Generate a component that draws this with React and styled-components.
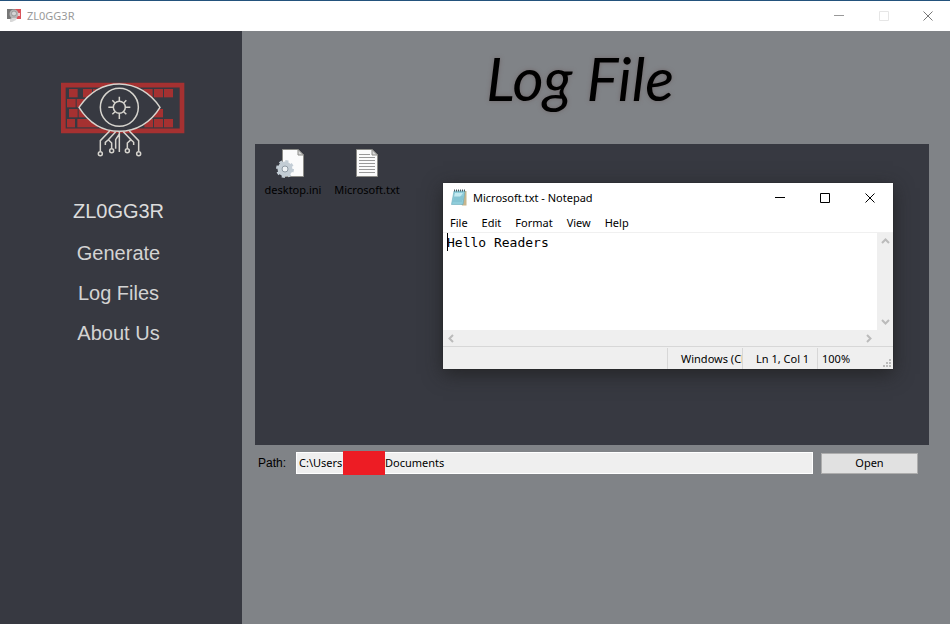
import React from "react";
import styled, { createGlobalStyle } from "styled-components";

const Global = createGlobalStyle`
  *, *::before, *::after { box-sizing: border-box; }
  body { margin: 0; background: #808387; font: 12px/16px "Noto Sans", "Open Sans", sans-serif; color: #000; }
  button, input, textarea { font: inherit; color: inherit; margin: 0; padding: 0; border: 0; background: none; outline: none; }
`;

const Window = styled.div`
  display: flex;
  flex-direction: column;
  min-height: 100vh;
`;

const TitleBar = styled.header`
  display: flex;
  align-items: center;
  height: 31px;
  padding-left: 7px;
  background: #fff;
  border-top: 1px solid #23527c;
  color: #999;
  font-size: 11px;
`;

const WindowName = styled.span`
  flex: 1;
  margin-left: 6px;
  white-space: nowrap;
`;

const CaptionButton = styled.button`
  display: flex;
  align-items: center;
  justify-content: center;
  width: ${(p) => p.$width}px;
  height: 29px;
  color: ${(p) => p.$tone};
`;

const Body = styled.div`
  display: flex;
  flex: 1;
`;

const Sidebar = styled.nav`
  display: flex;
  flex-direction: column;
  align-items: center;
  flex: 0 0 242px;
  padding: 51px 5px 0 0;
  background: #373941;
`;

const LogoDrawing = styled.svg`
  margin-left: 8px;
`;

const Brand = styled.h1`
  margin: 41px 0 10px;
  font: 20px/24px "Liberation Sans", Arial, sans-serif;
  color: #dcdcdc;
`;

const NavLink = styled.a`
  font: 20px/40px "Liberation Sans", Arial, sans-serif;
  color: #d3d3d3;
  text-decoration: none;
`;

const Main = styled.main`
  display: flex;
  flex-direction: column;
  flex: 1;
  min-width: 0;
  padding: 0 21px 0 13px;
`;

const Heading = styled.h2`
  margin: 0;
  padding: 13px 24px 0 0;
  height: 113px;
  text-align: center;
  font: italic 400 60px/68px Lato, "Liberation Sans", cursive;
  text-shadow: 0 0 4px #70686a;
`;

const Files = styled.section`
  position: relative;
  display: flex;
  align-items: flex-start;
  height: 301px;
  padding: 4px 0 0 1px;
  background: #373941;
`;

const FileItem = styled.button`
  display: flex;
  flex-direction: column;
  align-items: center;
  gap: 2px;
  width: 74px;
  font-size: 11px;
  white-space: nowrap;
`;

const PathRow = styled.form`
  display: flex;
  align-items: center;
  padding: 7px 11px 0 3px;
  gap: 8px;
`;

const PathLabel = styled.label`
  width: 30px;
  font: 12px/16px "Liberation Sans", Arial, sans-serif;
`;

const PathField = styled.div`
  display: flex;
  align-items: center;
  flex: 1;
  height: 22px;
  background: #efefef;
  border: 1px solid #fff;
`;

const PathInput = styled.input`
  flex: ${(p) => (p.$grow ? "1" : "0 0 46px")};
  min-width: 0;
  height: 20px;
  padding-left: ${(p) => (p.$grow ? 0 : 2)}px;
  padding-bottom: 2px;
  font-size: 11px;
`;

const Redaction = styled.span`
  flex: 0 0 42px;
  height: 24px;
  background: #ed1c24;
`;

const OpenButton = styled.button`
  width: 97px;
  height: 21px;
  background: #e1e1e1;
  border: 1px solid #adadad;
  font-size: 11px;
  line-height: 18px;
`;

const Notepad = styled.section`
  position: absolute;
  top: 39px;
  right: 36px;
  width: 450px;
  background: #fff;
  font-size: 11px;
  box-shadow: 0 0 1px #222, 0 5px 18px rgba(30, 30, 30, 0.75);
`;

const NotepadBar = styled.header`
  display: flex;
  align-items: center;
  height: 30px;
  padding-left: 8px;
`;

const Menu = styled.div`
  display: flex;
  gap: 14px;
  height: 20px;
  padding-left: 7px;
  border-bottom: 1px solid #f0f0f0;
`;

const MenuItem = styled.button`
  line-height: 18px;
`;

const Editor = styled.div`
  display: grid;
  grid-template-columns: 1fr 16px;
  background: #efefef;
`;

const Page = styled.div`
  position: relative;
  height: 97px;
  background: #fff;
`;

const TextArea = styled.textarea`
  display: block;
  width: 100%;
  height: 97px;
  padding: 1px 4px;
  resize: none;
  overflow: hidden;
  font: 13px/17px "DejaVu Sans Mono", "Liberation Mono", monospace;
`;

const Caret = styled.span`
  position: absolute;
  top: 0;
  left: 4px;
  width: 1px;
  height: 18px;
  background: #000;
`;

const ScrollTrack = styled.div`
  display: flex;
  justify-content: space-between;
  align-items: center;
  flex-direction: ${(p) => (p.$vertical ? "column" : "row")};
  padding: ${(p) => (p.$vertical ? "4px 0" : "0 4px")};
  height: ${(p) => (p.$vertical ? "auto" : "16px")};
`;

const ScrollButton = styled.button`
  display: flex;
  color: #bbb;
`;

const StatusBar = styled.footer`
  display: flex;
  justify-content: flex-end;
  height: 23px;
  padding-top: 1px;
  background: #efefef;
  border-top: 1px solid #d7d7d7;
`;

const StatusCell = styled.span`
  width: ${(p) => p.$width}px;
  padding-left: ${(p) => p.$pad}px;
  border-left: 1px solid #d7d7d7;
  line-height: 21px;
  white-space: nowrap;
  overflow: hidden;
`;

const Grip = styled.svg`
  align-self: flex-end;
  margin: 0 1px 1px 0;
`;

const captionPaths = {
  Minimize: "M0 4.500H10",
  Maximize: "M.5 .5H9.5V9.5H.5Z",
  Close: "M.5 .5L9.5 9.5M9.5 .5L.5 9.5",
};

function Caption({ name, tone, width = 45 }) {
  return (
    <CaptionButton type="button" aria-label={name} $tone={tone} $width={width}>
      <svg width="10" height="10" viewBox="0 0 10 10" fill="none" stroke="currentColor">
        <path d={captionPaths[name]} />
      </svg>
    </CaptionButton>
  );
}

const chevrons = {
  Up: "M1 6L4.500 2.500L8 6",
  Down: "M1 3L4.500 6.500L8 3",
  Left: "M6 1L2.500 4.500L6 8",
  Right: "M3 1L6.500 4.500L3 8",
};

function Scroll({ way }) {
  return (
    <ScrollButton type="button" aria-label={"Scroll " + way.toLowerCase()}>
      <svg width="9" height="9" viewBox="0 0 9 9" fill="none" stroke="currentColor" strokeWidth="2">
        <path d={chevrons[way]} />
      </svg>
    </ScrollButton>
  );
}

function AppIcon() {
  return (
    <svg width="14" height="16" viewBox="0 0 14 16">
      <path d="M0 1H8V11H0Z" fill="#777" />
      <path d="M8 1H14V11H8Z" fill="#d9535a" />
      <circle cx="7" cy="6" r="4.500" fill="#b5b5b5" />
      <circle cx="7" cy="5.500" r="2.500" fill="#d6d6d6" stroke="#999" />
      <path d="M3 11L5 10H10L9 12L5 14H3Z" fill="#d8d8d8" />
      <path d="M11 5H13V8H11Z" fill="#f0c5c7" />
    </svg>
  );
}

const logoKeys = [
  [57, 57, 26], [99, 57, 27], [129, 57, 18], [51, 87, 26], [80, 87, 22], [57, 117, 26], [86, 117, 22],
  [51, 147, 24], [82, 147, 62], [280, 57, 28], [312, 57, 27], [342, 57, 27],
  [303, 117, 36], [283, 147, 26], [312, 147, 27], [342, 147, 27],
];

function Logo() {
  return (
    <LogoDrawing width="126" height="76" viewBox="30 36 378 228" fill="none" role="img" aria-label="Eye over a keyboard">
      <path d="M40 45.500H396V182.500H40Z" stroke="#a53131" strokeWidth="14" />
      {logoKeys.map(([x, y, w]) => (
        <rect key={x + "-" + y} x={x} y={y} width={w} height="25" fill="#a53131" />
      ))}
      <g stroke="#d6d4ce" strokeWidth="4.500">
        <path d="M87 112C116 70 158 42 208 42S302 70 330 112C302 158 258 184 208 184S116 158 87 112Z" fill="#373941" />
        <circle cx="208" cy="112" r="57" />
        <circle cx="208" cy="112" r="18" />
        <path d="M208 94V80M208 130V147M190 112H175M226 112H241M195 99L187 91M221 99L229 91M195 125L187 133M221 125L229 133" />
        <path d="M179 183L151 212V244M197 185L175 209M166 225V217L175 209L185 219V235M197 236V209L208 192M208 185V246M220 185L243 209L232 219V235M243 209L251 217V225M238 183L266 212V244" />
        <circle cx="151" cy="251" r="6" />
        <circle cx="185" cy="242" r="6" />
        <circle cx="232" cy="242" r="6" />
        <circle cx="266" cy="251" r="6" />
      </g>
    </LogoDrawing>
  );
}

function Sheet() {
  return (
    <>
      <path d="M11.500 1.500H27L32.500 7V28.500H11.500Z" fill="#fbfbfb" stroke="#8c8c88" />
      <path d="M27 1.500V7H32.500Z" fill="#d8d8d8" stroke="#8c8c88" />
    </>
  );
}

function SettingsFileIcon() {
  return (
    <svg width="44" height="32" viewBox="0 0 44 32">
      <Sheet />
      <circle cx="14" cy="21" r="5" fill="none" stroke="#c3cdd5" strokeWidth="5" />
      <circle cx="14" cy="21" r="7.500" fill="none" stroke="#c3cdd5" strokeWidth="3" strokeDasharray="3 2.900" />
      <circle cx="14" cy="21" r="3" fill="#eef2f5" stroke="#8e9aa4" />
    </svg>
  );
}

function TextFileIcon() {
  return (
    <svg width="44" height="32" viewBox="0 0 44 32">
      <Sheet />
      <path d="M14 6.500H25M14 9.500H30M14 12.500H30M14 15.500H30M14 18.500H30M14 21.500H30M14 24.500H30" stroke="#999" />
    </svg>
  );
}

function NotepadIcon() {
  return (
    <svg width="16" height="18" viewBox="0 0 16 18">
      <path d="M5 2H15.500V16.500H11Z" fill="#c8b58c" />
      <path d="M3 2H14L12 15.500H.5Z" fill="#8fcddb" stroke="#68a9b8" strokeWidth=".6" />
      <path d="M4 4H12L9 8H3Z" fill="#c3e9f0" />
      <path d="M3 8H12M2.500 10H12M2 12H11" stroke="#72b6c6" strokeWidth=".7" />
      <path d="M3 1.500H14" stroke="#4d5b60" strokeWidth="2" strokeDasharray="1 1" />
    </svg>
  );
}

export default function App() {
  return (
    <>
      <Global />
      <Window>
        <TitleBar>
          <AppIcon />
          <WindowName>ZL0GG3R</WindowName>
          <Caption name="Minimize" tone="#999" />
          <Caption name="Maximize" tone="#e6e6e6" />
          <Caption name="Close" tone="#777" width={44} />
        </TitleBar>
        <Body>
          <Sidebar>
            <Logo />
            <Brand>ZL0GG3R</Brand>
            <NavLink href="#generate">Generate</NavLink>
            <NavLink href="#log-files">Log Files</NavLink>
            <NavLink href="#about">About Us</NavLink>
          </Sidebar>
          <Main>
            <Heading>Log File</Heading>
            <Files>
              <FileItem type="button">
                <SettingsFileIcon />
                desktop.ini
              </FileItem>
              <FileItem type="button">
                <TextFileIcon />
                Microsoft.txt
              </FileItem>
              <Notepad>
                <NotepadBar>
                  <NotepadIcon />
                  <WindowName>Microsoft.txt - Notepad</WindowName>
                  <Caption name="Minimize" tone="#000" />
                  <Caption name="Maximize" tone="#000" />
                  <Caption name="Close" tone="#000" width={46} />
                </NotepadBar>
                <Menu>
                  {["File", "Edit", "Format", "View", "Help"].map((m) => (
                    <MenuItem type="button" key={m}>{m}</MenuItem>
                  ))}
                </Menu>
                <Editor>
                  <Page>
                    <TextArea aria-label="Document text" defaultValue="Hello Readers" spellCheck={false} />
                    <Caret />
                  </Page>
                  <ScrollTrack $vertical>
                    <Scroll way="Up" />
                    <Scroll way="Down" />
                  </ScrollTrack>
                  <ScrollTrack>
                    <Scroll way="Left" />
                    <Scroll way="Right" />
                  </ScrollTrack>
                </Editor>
                <StatusBar>
                  <StatusCell $width={75} $pad={13}>Windows (CRLF)</StatusCell>
                  <StatusCell $width={75} $pad={13}>Ln 1, Col 1</StatusCell>
                  <StatusCell $width={66} $pad={4}>100%</StatusCell>
                  <Grip width="9" height="9" viewBox="0 0 9 9" fill="#bbb">
                    <path d="M6 0H8V2H6ZM3 3H5V5H3ZM6 3H8V5H6ZM0 6H2V8H0ZM3 6H5V8H3ZM6 6H8V8H6Z" />
                  </Grip>
                </StatusBar>
              </Notepad>
            </Files>
            <PathRow>
              <PathLabel htmlFor="path">Path:</PathLabel>
              <PathField>
                <PathInput id="path" defaultValue={"C:\\Users"} />
                <Redaction />
                <PathInput $grow aria-label="Folder" defaultValue="Documents" />
              </PathField>
              <OpenButton type="button">Open</OpenButton>
            </PathRow>
          </Main>
        </Body>
      </Window>
    </>
  );
}
